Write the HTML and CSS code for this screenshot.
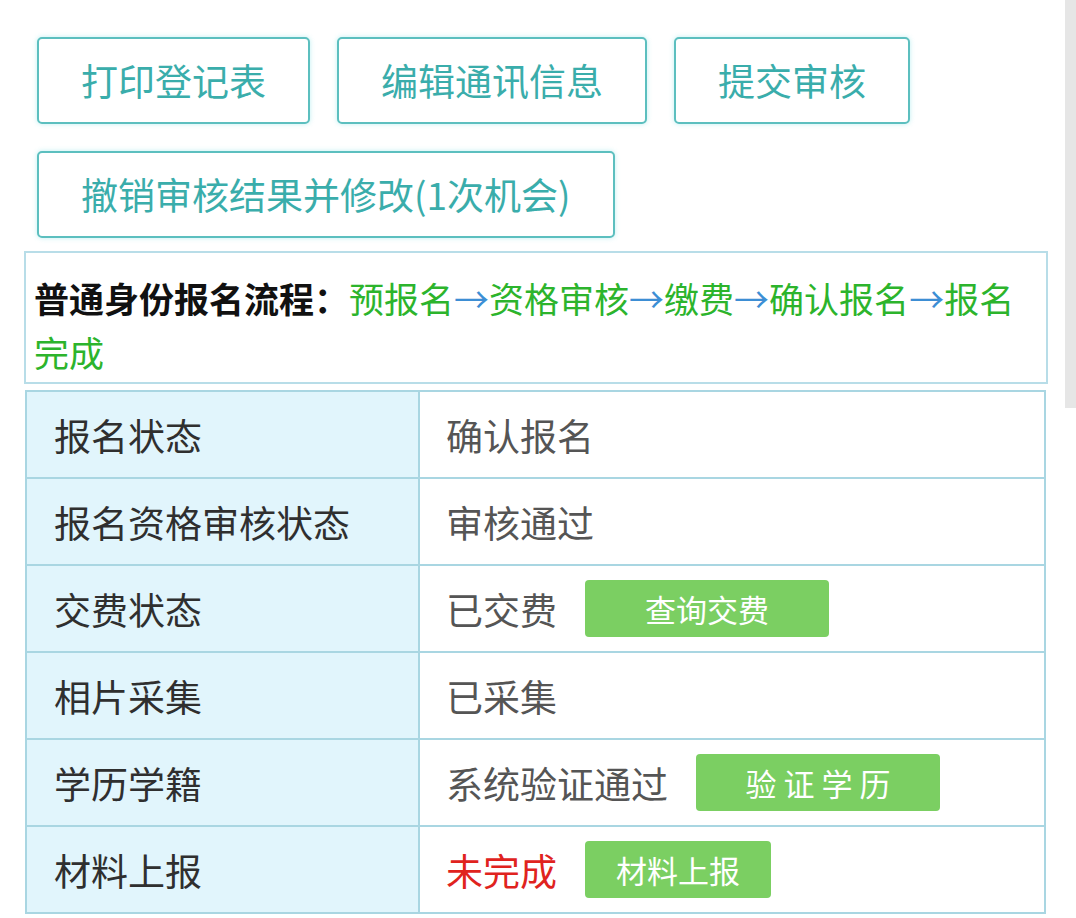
FILE: index.html
```html
<!DOCTYPE html>
<html lang="zh-CN">
<head>
<meta charset="utf-8">
<title>报名状态</title>
<link rel="stylesheet" href="styles.css">
</head>
<body>
<div class="page">
  <main class="main">
    <div class="actions">
      <button class="act-btn">打印登记表</button>
      <button class="act-btn">编辑通讯信息</button>
      <button class="act-btn">提交审核</button>
      <button class="act-btn">撤销审核结果并修改(1次机会)</button>
    </div>

    <div class="flow">
      <span class="flow-title">普通身份报名流程：</span><span class="step">预报名</span><span class="arrow">→</span><span class="step">资格审核</span><span class="arrow">→</span><span class="step">缴费</span><span class="arrow">→</span><span class="step">确认报名</span><span class="arrow">→</span><span class="step">报名完成</span>
    </div>

    <table class="status">
      <tr>
        <th>报名状态</th>
        <td>确认报名</td>
      </tr>
      <tr>
        <th>报名资格审核状态</th>
        <td>审核通过</td>
      </tr>
      <tr>
        <th>交费状态</th>
        <td><div class="cell"><span>已交费</span><button class="go-btn go-wide">查询交费</button></div></td>
      </tr>
      <tr>
        <th>相片采集</th>
        <td>已采集</td>
      </tr>
      <tr>
        <th>学历学籍</th>
        <td><div class="cell"><span>系统验证通过</span><button class="go-btn go-wide">验 证 学 历</button></div></td>
      </tr>
      <tr>
        <th>材料上报</th>
        <td><div class="cell"><span class="todo">未完成</span><button class="go-btn">材料上报</button></div></td>
      </tr>
    </table>
  </main>
  <div class="scroll-track"><div class="scroll-thumb"></div></div>
</div>
</body>
</html>
```

FILE: styles.css
```css
html, body {
  margin: 0;
  padding: 0;
  background: #ffffff;
}

body {
  font-family: "Noto Sans CJK SC", "Noto Sans", sans-serif;
  color: #333;
}

.page {
  display: flex;
  align-items: flex-start;
  width: 1076px;
}

.main {
  flex: 1;
  padding: 37px 0 0 24px;
}

.scroll-track {
  width: 11px;
  flex: none;
}

.scroll-thumb {
  height: 408px;
  background: #e6e6e6;
}

.actions {
  display: flex;
  flex-wrap: wrap;
  gap: 27px;
  padding-left: 13px;
  width: 1010px;
}

.act-btn {
  box-sizing: border-box;
  height: 87px;
  padding: 0 42px;
  border: 2px solid #5cbfbf;
  border-radius: 5px;
  background: #fff;
  box-shadow: 0 0 5px rgba(110, 220, 225, 0.45);
  color: #3aadab;
  font-family: "Noto Sans CJK SC", sans-serif;
  font-size: 37px;
  line-height: 83px;
  white-space: nowrap;
}

.flow {
  box-sizing: border-box;
  width: 1024px;
  margin-top: 13px;
  padding: 18px 8px 3px 8px;
  border: 2px solid #b8dde8;
  font-size: 35px;
  line-height: 54px;
}

.flow-title {
  font-weight: bold;
  color: #111;
}

.step {
  color: #2cb42c;
}

.arrow {
  color: #3d8ed4;
}

.status {
  width: 1021px;
  margin: 6px 0 0 1px;
  border-collapse: collapse;
  border: 2px solid #a9d6e2;
  font-size: 37px;
}

.status th,
.status td {
  height: 85px;
  border: 2px solid #a9d6e2;
  padding: 0;
  text-align: left;
  vertical-align: middle;
  font-weight: normal;
  line-height: 50px;
}

.status th {
  width: 364px;
  padding-left: 27px;
  background: #e1f5fc;
  color: #2f2f2f;
}

.status td {
  padding-left: 26px;
  color: #555;
}

.cell {
  display: flex;
  align-items: center;
}

.todo {
  color: #e0231e;
}

.go-btn {
  box-sizing: border-box;
  height: 57px;
  margin-left: 28px;
  padding: 0 31px;
  border: none;
  border-radius: 4px;
  background: #7bcf62;
  color: #fff;
  font-family: "Noto Sans CJK SC", sans-serif;
  font-size: 31px;
  line-height: 57px;
  white-space: nowrap;
}

.go-wide {
  width: 244px;
}
```
